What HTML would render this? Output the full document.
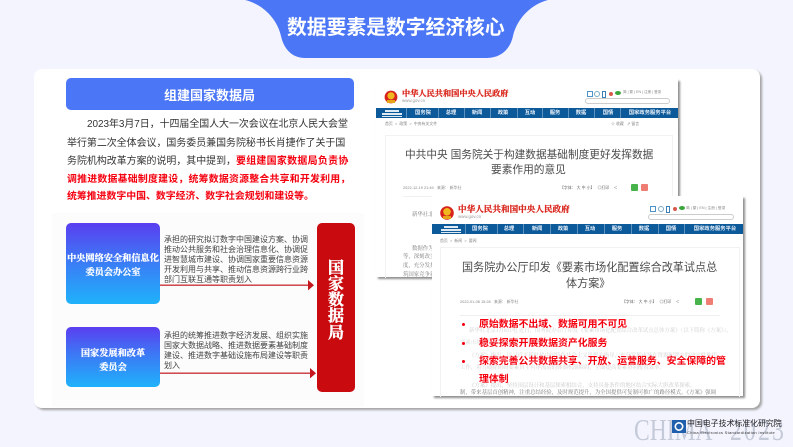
<!DOCTYPE html>
<html lang="zh">
<head>
<meta charset="utf-8">
<style>
html,body{margin:0;padding:0}
body{width:793px;height:446px;overflow:hidden;background:#f3f4fe;position:relative;font-family:"Liberation Sans","Noto Sans CJK SC",sans-serif}
.a{position:absolute}
.t{position:absolute;white-space:nowrap;line-height:1}
.p{font-size:9.95px;color:#333;margin-top:1.5px}
.r{font-size:9.9px;color:#f5000f;font-weight:700;margin-top:1.5px}
.s{font-size:8px;color:#444;margin-top:1px;filter:blur(.25px)}
.b{font-family:"Liberation Serif","Noto Serif CJK SC",serif;font-weight:700;color:#fff;font-size:9.2px;text-align:center;margin-top:2px;-webkit-text-stroke:.25px #fff;filter:blur(.2px)}
.box{position:absolute;left:66px;width:94px;border-radius:5px;background:linear-gradient(180deg,#5a3ef0 0%,#3d78f5 45%,#1fb2fb 100%)}
.doc{position:absolute;background:#fff;box-shadow:2px 2px 2px #8f8f8f;overflow:hidden}
.nav{position:absolute;background:#0d5a9b}
.n{position:absolute;white-space:nowrap;line-height:1;color:#e8f0f8;font-weight:700;transform:translateX(-50%);font-size:5.3px;filter:blur(.25px)}
.sep{position:absolute;top:0;bottom:0;width:1px;background:#5d92bf}
.gt{position:absolute;white-space:nowrap;line-height:1;color:#d9261c;font-family:"Liberation Serif","Noto Serif CJK SC",serif;font-weight:700;-webkit-text-stroke:.25px #d9261c;filter:blur(.2px)}
.ti{position:absolute;white-space:nowrap;line-height:1;color:#4a4a4a;filter:blur(.2px);margin-top:1px}
.g{position:absolute;white-space:nowrap;line-height:1;font-size:3.9px;color:#888;filter:blur(.2px)}
.f{position:absolute;white-space:nowrap;line-height:1;font-family:"Liberation Serif","Noto Serif CJK SC",serif;font-size:5.4px;color:#777;filter:blur(.3px)}
.dot{position:absolute;width:3px;height:3px;border-radius:50%;background:#f5000f}
</style>
</head>
<body>
<svg class="a" style="left:0;top:0" width="793" height="70"><path d="M245 0C262 4 277 18 281 36C284 50 293 58 305 58L487 58C500 58 510 50 513 36C517 18 532 4 548 0Z" fill="#4b76f5"/></svg>
<div class="t" style="left:287px;top:19px;font-size:19.8px;font-weight:700;color:#fff">数据要素是数字经济核心</div>

<div class="a" style="left:34px;top:69px;width:726px;height:339px;background:#fff;border-radius:8px;box-shadow:2px 2px 2px #a3a3a3"></div>
<div class="a" style="left:52px;top:213px;width:312px;height:194px;background:#fcfcfd"></div>

<div class="a" style="left:66px;top:78px;width:288px;height:32px;background:#4b76f5;border-radius:5px"></div>
<div class="t" style="left:164px;top:89px;font-size:13px;font-weight:700;color:#fff">组建国家数据局</div>

<div class="t p" style="left:87px;top:118px;letter-spacing:-.03px">2023年3月7日，十四届全国人大一次会议在北京人民大会堂</div>
<div class="t p" style="left:67px;top:137px">举行第二次全体会议，国务委员兼国务院秘书长肖捷作了关于国</div>
<div class="t p" style="left:67px;top:155px">务院机构改革方案的说明，其中提到，<span style="color:#f5000f;font-weight:700;letter-spacing:.3px">要组建国家数据局负责协</span></div>
<div class="t r" style="left:67px;top:173px;letter-spacing:.25px">调推进数据基础制度建设，统筹数据资源整合共享和开发利用，</div>
<div class="t r" style="left:67px;top:190px">统筹推进数字中国、数字经济、数字社会规划和建设等。</div>

<!-- diagram -->
<div class="box" style="top:223px;height:81px"></div>
<div class="box" style="top:327px;height:60px"></div>
<div class="t b" style="left:66px;top:252px;width:94px">中央网络安全和信息化</div>
<div class="t b" style="left:66px;top:266px;width:94px">委员会办公室</div>
<div class="t b" style="left:66px;top:347px;width:94px">国家发展和改革</div>
<div class="t b" style="left:66px;top:361px;width:94px">委员会</div>
<div class="t s" style="left:164px;top:235px">承担的研究拟订数字中国建设方案、协调</div>
<div class="t s" style="left:164px;top:245px">推动公共服务和社会治理信息化、协调促</div>
<div class="t s" style="left:164px;top:255px">进智慧城市建设、协调国家重要信息资源</div>
<div class="t s" style="left:164px;top:265px">开发利用与共享、推动信息资源跨行业跨</div>
<div class="t s" style="left:164px;top:275px">部门互联互通等职责划入</div>
<div class="t s" style="left:164px;top:331px">承担的统筹推进数字经济发展、组织实施</div>
<div class="t s" style="left:164px;top:341px">国家大数据战略、推进数据要素基础制度</div>
<div class="t s" style="left:164px;top:351px">建设、推进数字基础设施布局建设等职责</div>
<div class="t s" style="left:164px;top:361px">划入</div>
<svg class="a" style="left:160px;top:275px" width="160" height="110">
<rect x="0" y="9.5" width="149" height="1.4" fill="#c8383c"/><path d="M148 5L154 10.2L148 15.4Z" fill="#c4161c"/>
<rect x="0" y="97.5" width="150" height="1.4" fill="#c8383c"/><path d="M150 93L156 98.2L150 103.4Z" fill="#c4161c"/>
</svg>
<div class="a" style="left:317px;top:223px;width:38px;height:169px;background:#c90a0e;border-radius:5px"></div>
<div class="t" style="left:328px;top:260.5px;width:16px;font-size:16px;line-height:16.3px;white-space:normal;font-weight:700;color:#fff;font-family:'Liberation Serif','Noto Serif CJK SC',serif;-webkit-text-stroke:.4px #fff">国家数据局</div>

<!-- doc 1 -->
<div class="doc" style="left:376px;top:79px;width:302px;height:198px"></div>
<svg class="a" style="left:384px;top:90px" width="15" height="15"><circle cx="7" cy="7" r="6.4" fill="#d8231c"/><circle cx="7" cy="5.8" r="3.6" fill="#f0b81e"/><rect x="3" y="10" width="8" height="3" fill="#e8a417"/></svg>
<div class="gt" style="left:402px;top:90px;font-size:8.2px">中华人民共和国中央人民政府</div>
<div class="g" style="left:402px;top:99px;font-size:4.4px;color:#999;font-family:'Liberation Sans'">www.gov.cn</div>
<div class="a" style="left:585px;top:98px;width:83px;height:4px;border:1px solid #ccc;border-radius:3px"></div>
<div class="a" style="left:587px;top:91px;width:4px;height:4px;border:.7px solid #4f93c8"></div>
<div class="a" style="left:594px;top:91px;width:4px;height:4px;border:.7px solid #7aaac8;border-radius:50%"></div>
<div class="a" style="left:602px;top:91px;width:2px;height:5px;border:.6px solid #3c7fb5"></div>
<div class="a" style="left:609px;top:92px;width:4px;height:4px;background:#d8584c;border-radius:50%"></div>
<div class="a" style="left:615px;top:91px;width:6px;height:4px;background:#3aa53a;border-radius:50%"></div>
<div class="g" style="left:623px;top:91px;font-size:3.6px">简 | 繁 | EN | 注册 | 登录</div>
<div class="nav" style="left:376px;top:108px;width:302px;height:10px">
<div class="sep" style="left:30px"></div><div class="sep" style="left:62px"></div><div class="sep" style="left:88px"></div><div class="sep" style="left:114px"></div><div class="sep" style="left:141px"></div><div class="sep" style="left:166px"></div><div class="sep" style="left:192px"></div><div class="sep" style="left:218px"></div><div class="sep" style="left:244px"></div>
<div class="a" style="left:9px;top:2px;width:14px;height:2px;background:#dfeaf3"></div><div class="a" style="left:6px;top:5px;width:20px;height:2px;background:#dfeaf3"></div><div class="a" style="left:6px;top:8px;width:20px;height:1px;background:#dfeaf3"></div>
<div class="n" style="left:47px;top:2.5px">国务院</div><div class="n" style="left:75px;top:2.5px">总理</div><div class="n" style="left:101px;top:2.5px">新闻</div><div class="n" style="left:127px;top:2.5px">政策</div><div class="n" style="left:154px;top:2.5px">互动</div><div class="n" style="left:179px;top:2.5px">服务</div><div class="n" style="left:205px;top:2.5px">数据</div><div class="n" style="left:232px;top:2.5px">国情</div><div class="n" style="left:274px;top:2.5px">国家政务服务平台</div>
</div>
<div class="g" style="left:385px;top:122px">首页 &nbsp;&gt;&nbsp; 政策 &nbsp;&gt;&nbsp; 中央有关文件</div>
<div class="g" style="left:611px;top:122px">☆ 收藏 &nbsp; ⇗ 留言</div>
<div class="a" style="left:385px;top:135px;width:286px;height:142px;border:1px solid #f2f2f2;border-bottom:0"></div>
<div class="ti" style="left:405px;top:149px;font-size:10.7px;letter-spacing:-.02px">中共中央 国务院关于构建数据基础制度更好发挥数据</div>
<div class="ti" style="left:491px;top:164px;font-size:10.7px">要素作用的意见</div>
<div class="g" style="left:403px;top:186px">2022-12-19 21:49 &nbsp; 来源： 新华社</div>
<div class="g" style="left:560px;top:186px;color:#666">【字体： 大 中 小】 &nbsp; ◎打印 &nbsp;&nbsp; ＜</div>
<div class="a" style="left:631px;top:184px;width:7px;height:7px;background:#46b44a;border-radius:1px"></div>
<div class="a" style="left:641px;top:184px;width:7px;height:7px;background:#ef7d73;border-radius:1px"></div>
<div class="a" style="left:403px;top:196px;width:260px;height:1px;background:#f0f0f0"></div>
<div class="f" style="left:412px;top:213px">新华社北京电</div>
<div class="f" style="left:412px;top:247px">数据作为新型</div>
<div class="f" style="left:403px;top:255px">等，深刻改变着</div>
<div class="f" style="left:403px;top:264px">度，充分发挥我</div>
<div class="f" style="left:403px;top:273px">筑国家竞争新优</div>

<!-- doc 2 -->
<div class="doc" style="left:432px;top:196px;width:311px;height:200px"></div>
<svg class="a" style="left:440px;top:206px" width="15" height="15"><circle cx="7" cy="7" r="6.8" fill="#d8231c"/><circle cx="7" cy="5.8" r="3.8" fill="#f0b81e"/><rect x="3" y="10" width="8" height="3" fill="#e8a417"/></svg>
<div class="gt" style="left:458px;top:205px;font-size:8.6px">中华人民共和国中央人民政府</div>
<div class="g" style="left:458px;top:215px;font-size:4.4px;color:#999;font-family:'Liberation Sans'">www.gov.cn</div>
<div class="a" style="left:648px;top:214px;width:84px;height:4px;border:1px solid #ccc;border-radius:3px"></div>
<div class="a" style="left:650px;top:206px;width:4px;height:4px;border:.7px solid #4f93c8"></div>
<div class="a" style="left:658px;top:206px;width:4px;height:4px;border:.7px solid #7aaac8;border-radius:50%"></div>
<div class="a" style="left:666px;top:206px;width:2px;height:5px;border:.6px solid #3c7fb5"></div>
<div class="a" style="left:673px;top:207px;width:4px;height:4px;background:#d8584c;border-radius:50%"></div>
<div class="a" style="left:679px;top:206px;width:6px;height:4px;background:#3aa53a;border-radius:50%"></div>
<div class="g" style="left:686px;top:207px;font-size:3.7px">简 | 繁 | EN | 注册 | 登录</div>
<div class="nav" style="left:432px;top:224px;width:311px;height:10px">
<div class="sep" style="left:33px"></div><div class="sep" style="left:65px"></div><div class="sep" style="left:91px"></div><div class="sep" style="left:118px"></div><div class="sep" style="left:145px"></div><div class="sep" style="left:172px"></div><div class="sep" style="left:199px"></div><div class="sep" style="left:226px"></div><div class="sep" style="left:252px"></div>
<div class="a" style="left:12px;top:2px;width:14px;height:2px;background:#dfeaf3"></div><div class="a" style="left:9px;top:5px;width:20px;height:2px;background:#dfeaf3"></div><div class="a" style="left:9px;top:8px;width:20px;height:1px;background:#dfeaf3"></div>
<div class="n" style="left:48px;top:2.5px">国务院</div><div class="n" style="left:77px;top:2.5px">总理</div><div class="n" style="left:105px;top:2.5px">新闻</div><div class="n" style="left:131px;top:2.5px">政策</div><div class="n" style="left:158px;top:2.5px">互动</div><div class="n" style="left:185px;top:2.5px">服务</div><div class="n" style="left:212px;top:2.5px">数据</div><div class="n" style="left:239px;top:2.5px">国情</div><div class="n" style="left:283px;top:2.5px">国家政务服务平台</div>
</div>
<div class="g" style="left:440px;top:239px">首页 &nbsp;&gt;&nbsp; 新闻 &nbsp;&gt;&nbsp; 要闻</div>
<div class="a" style="left:440px;top:247px;width:298px;height:149px;border:1px solid #f2f2f2;border-bottom:0"></div>
<div class="ti" style="left:462px;top:261.5px;font-size:11.1px">国务院办公厅印发《要素市场化配置综合改革试点总</div>
<div class="ti" style="left:566px;top:277.5px;font-size:11.1px">体方案》</div>
<div class="g" style="left:460px;top:300px">2022-01-06 15:28 &nbsp; 来源： 新华社</div>
<div class="g" style="left:622px;top:300px;color:#666">【字体： 大 中 小】 &nbsp; ◎打印 &nbsp;&nbsp; ＜</div>
<div class="a" style="left:695px;top:298px;width:7px;height:7px;background:#46b44a;border-radius:1px"></div>
<div class="a" style="left:706px;top:298px;width:7px;height:7px;background:#ef7d73;border-radius:1px"></div>
<div class="a" style="left:460px;top:315px;width:260px;height:1px;background:#eee"></div>
<div class="f" style="left:469px;top:329px;color:#d0d0d0">新华社北京1月6日电 近日，国务院办公厅印发《要素市场化配置综合改革试点总体方案》（以下简称《方案》），</div>
<div class="f" style="left:460px;top:341px;color:#d8d8d8">要素市场化配置综合改革试点工作。</div>
<div class="f" style="left:469px;top:354px;color:#d0d0d0">《方案》指出，以习近平新时代中国特色社会主义思想为指导，充分发挥市场在资源配置中的决定性作用，</div>
<div class="f" style="left:460px;top:366px;color:#d0d0d0">工作，着力破除阻碍要素自主有序流动的体制机制障碍，全面提高要素协同配置效率。</div>
<div class="f" style="left:469px;top:384px;color:#c8c8c8">《方案》提出，坚持顶层设计和基层探索相结合，支持具备条件的地区结合实际大胆改革探索。</div>
<div class="f" style="left:460px;top:391px;color:#777">制，带来基层首创精神，注重总结经验，及时规范提升，为全国提供可复制可推广的路径模式。《方案》强调</div>
<div class="dot" style="left:462px;top:323px"></div>
<div class="dot" style="left:462px;top:342px"></div>
<div class="dot" style="left:462px;top:360px"></div>
<div class="t r" style="left:479px;top:318px">原始数据不出域、数据可用不可见</div>
<div class="t r" style="left:479px;top:337px">稳妥探索开展数据资产化服务</div>
<div class="t r" style="left:479px;top:355px">探索完善公共数据共享、开放、运营服务、安全保障的管</div>
<div class="t r" style="left:479px;top:373px">理体制</div>

<!-- footer -->
<div class="t" style="left:634px;top:414px;font-size:31px;color:#c5cad9;font-family:'Liberation Serif',serif;letter-spacing:0;transform:scaleX(.76);transform-origin:0 0">CHIMA</div>
<div class="t" style="left:730px;top:414px;font-size:31px;color:#c5cad9;font-family:'Liberation Serif',serif;letter-spacing:3px;transform:scaleX(.76);transform-origin:0 0">2023</div>
<svg class="a" style="left:672px;top:420px" width="14" height="13"><rect width="14" height="13" fill="#1f5fae"/><circle cx="7" cy="6.5" r="3.7" fill="none" stroke="#fff" stroke-width="1.6"/></svg>
<div class="t" style="left:687px;top:420px;font-size:7.9px;color:#222">中国电子技术标准化研究院</div>
<div class="t" style="left:687px;top:431px;font-size:4px;color:#333;letter-spacing:.3px">China Electronics Standardization Institute</div>
</body>
</html>
